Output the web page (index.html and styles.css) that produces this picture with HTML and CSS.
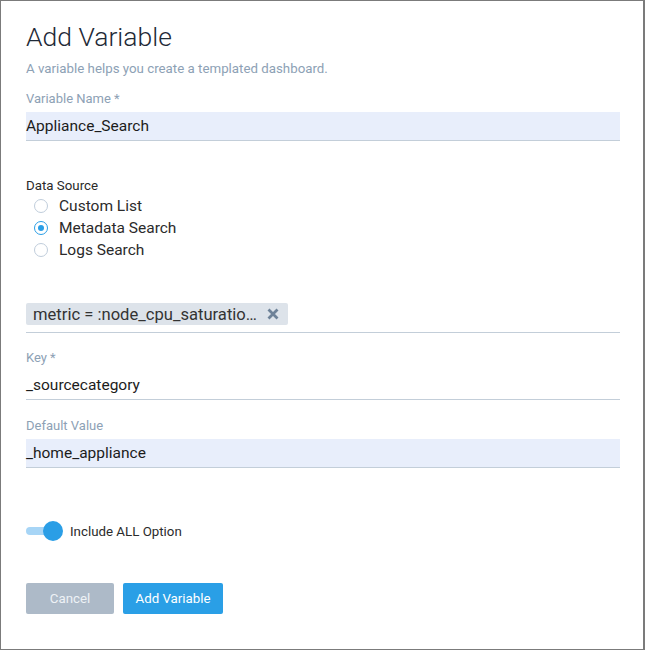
FILE: index.html
```html
<!DOCTYPE html>
<html>
<head>
<meta charset="utf-8">
<link rel="stylesheet" href="styles.css">
</head>
<body>
<div class="dialog">
  <h1 class="title">Add Variable</h1>
  <p class="subtitle">A variable helps you create a templated dashboard.</p>

  <div class="field field-name">
    <label class="label">Variable Name<span class="req">*</span></label>
    <div class="input filled">Appliance_Search</div>
  </div>

  <div class="source">
    <div class="source-title">Data Source</div>
    <div class="radios">
      <div class="radio"><span class="dot"></span><span>Custom List</span></div>
      <div class="radio checked"><span class="dot"></span><span>Metadata Search</span></div>
      <div class="radio"><span class="dot"></span><span>Logs Search</span></div>
    </div>
  </div>

  <div class="tags">
    <span class="tag">metric = :node_cpu_saturatio…
      <svg class="tag-x" width="12" height="12" viewBox="0 0 12 12"><path d="M1.5 1.5 L10.5 10.5 M10.5 1.5 L1.5 10.5" stroke="#6e8298" stroke-width="2.8" stroke-linecap="butt"/></svg>
    </span>
  </div>

  <div class="field field-key">
    <label class="label">Key<span class="req">*</span></label>
    <div class="input">_sourcecategory</div>
  </div>

  <div class="field field-default">
    <label class="label">Default Value</label>
    <div class="input filled">_home_appliance</div>
  </div>

  <div class="toggle-row">
    <span class="toggle"><span class="track"></span><span class="knob"></span></span>
    <span class="toggle-label">Include ALL Option</span>
  </div>

  <div class="buttons">
    <button class="btn btn-cancel">Cancel</button>
    <button class="btn btn-primary">Add Variable</button>
  </div>
</div>
</body>
</html>
```

FILE: styles.css
```css
* { box-sizing: border-box; }
html, body { margin: 0; padding: 0; background: #fff; }
body { font-family: Roboto, "Noto Sans", sans-serif; }

.dialog {
  width: 645px;
  height: 650px;
  border: 1px solid #7b7b7b;
  border-right-width: 2px;
  padding: 0 23px 0 25px;
  color: #1c1c1c;
}

.title {
  margin: 0;
  padding-top: 20px;
  font-size: 26.5px;
  font-weight: 300;
  line-height: 32px;
  color: #1f2a37;
}

.subtitle {
  margin: 8px 0 0;
  font-size: 13.3px;
  line-height: 16px;
  color: #8da1b5;
}

.field { display: flex; flex-direction: column; }
.field-name { margin-top: 14px; }
.label {
  font-size: 13px;
  line-height: 16px;
  color: #8da1b5;
}
.req { margin-left: 3px; }

.input {
  margin-top: 5px;
  height: 29px;
  font-size: 15.5px;
  line-height: 28px;
  color: #1c1c1c;
  border-bottom: 1px solid #c3ced9;
}
.input.filled { background: #e8eefb; }

.source { margin-top: 37px; }
.source-title {
  font-size: 13.3px;
  line-height: 16px;
  color: #2a2a2a;
}
.radios { display: flex; flex-direction: column; padding-left: 8px; margin-top: 1px; }
.radio {
  display: flex;
  align-items: center;
  height: 22px;
  font-size: 15.5px;
  color: #2b2b2b;
  gap: 11px;
}
.dot {
  width: 14px;
  height: 14px;
  border-radius: 50%;
  border: 1.5px solid #c0cddb;
  background: #fff;
  position: relative;
}
.radio.checked .dot { border-color: #2a9ee6; }
.radio.checked .dot::after {
  content: "";
  position: absolute;
  left: 2.5px; top: 2.5px;
  width: 6px; height: 6px;
  border-radius: 50%;
  background: #2a9ee6;
}

.tags {
  margin-top: 42px;
  padding-bottom: 7px;
  border-bottom: 1px solid #c3ced9;
  display: flex;
}
.tag {
  display: inline-flex;
  align-items: center;
  height: 22px;
  padding: 0 9px 0 7px;
  background: #dde3ea;
  border-radius: 2px;
  font-size: 16.6px;
  color: #333;
  gap: 10px;
}
.tag-x { display: block; }

.field-key { margin-top: 17px; }
.field-default { margin-top: 18px; }

.toggle-row {
  margin-top: 52px;
  display: flex;
  align-items: center;
  height: 22px;
}
.toggle { position: relative; width: 38px; height: 22px; display: inline-block; }
.track {
  position: absolute;
  left: 0; top: 7px;
  width: 32px; height: 8px;
  border-radius: 4px;
  background: #a7d5f6;
}
.knob {
  position: absolute;
  left: 17px; top: 1px;
  width: 20px; height: 20px;
  border-radius: 50%;
  background: #2a9ee6;
}
.toggle-label { margin-left: 6px; font-size: 13.3px; color: #2b2b2b; }

.buttons { margin-top: 41px; display: flex; gap: 9px; }
.btn {
  height: 31px;
  border: none;
  border-radius: 2px;
  font-family: Roboto, sans-serif;
  font-size: 13.3px;
  color: #fff;
  padding: 0;
}
.btn-cancel { width: 88px; background: #adbac8; color: #eef2f6; }
.btn-primary { width: 100px; background: #2a9fe6; }
```
